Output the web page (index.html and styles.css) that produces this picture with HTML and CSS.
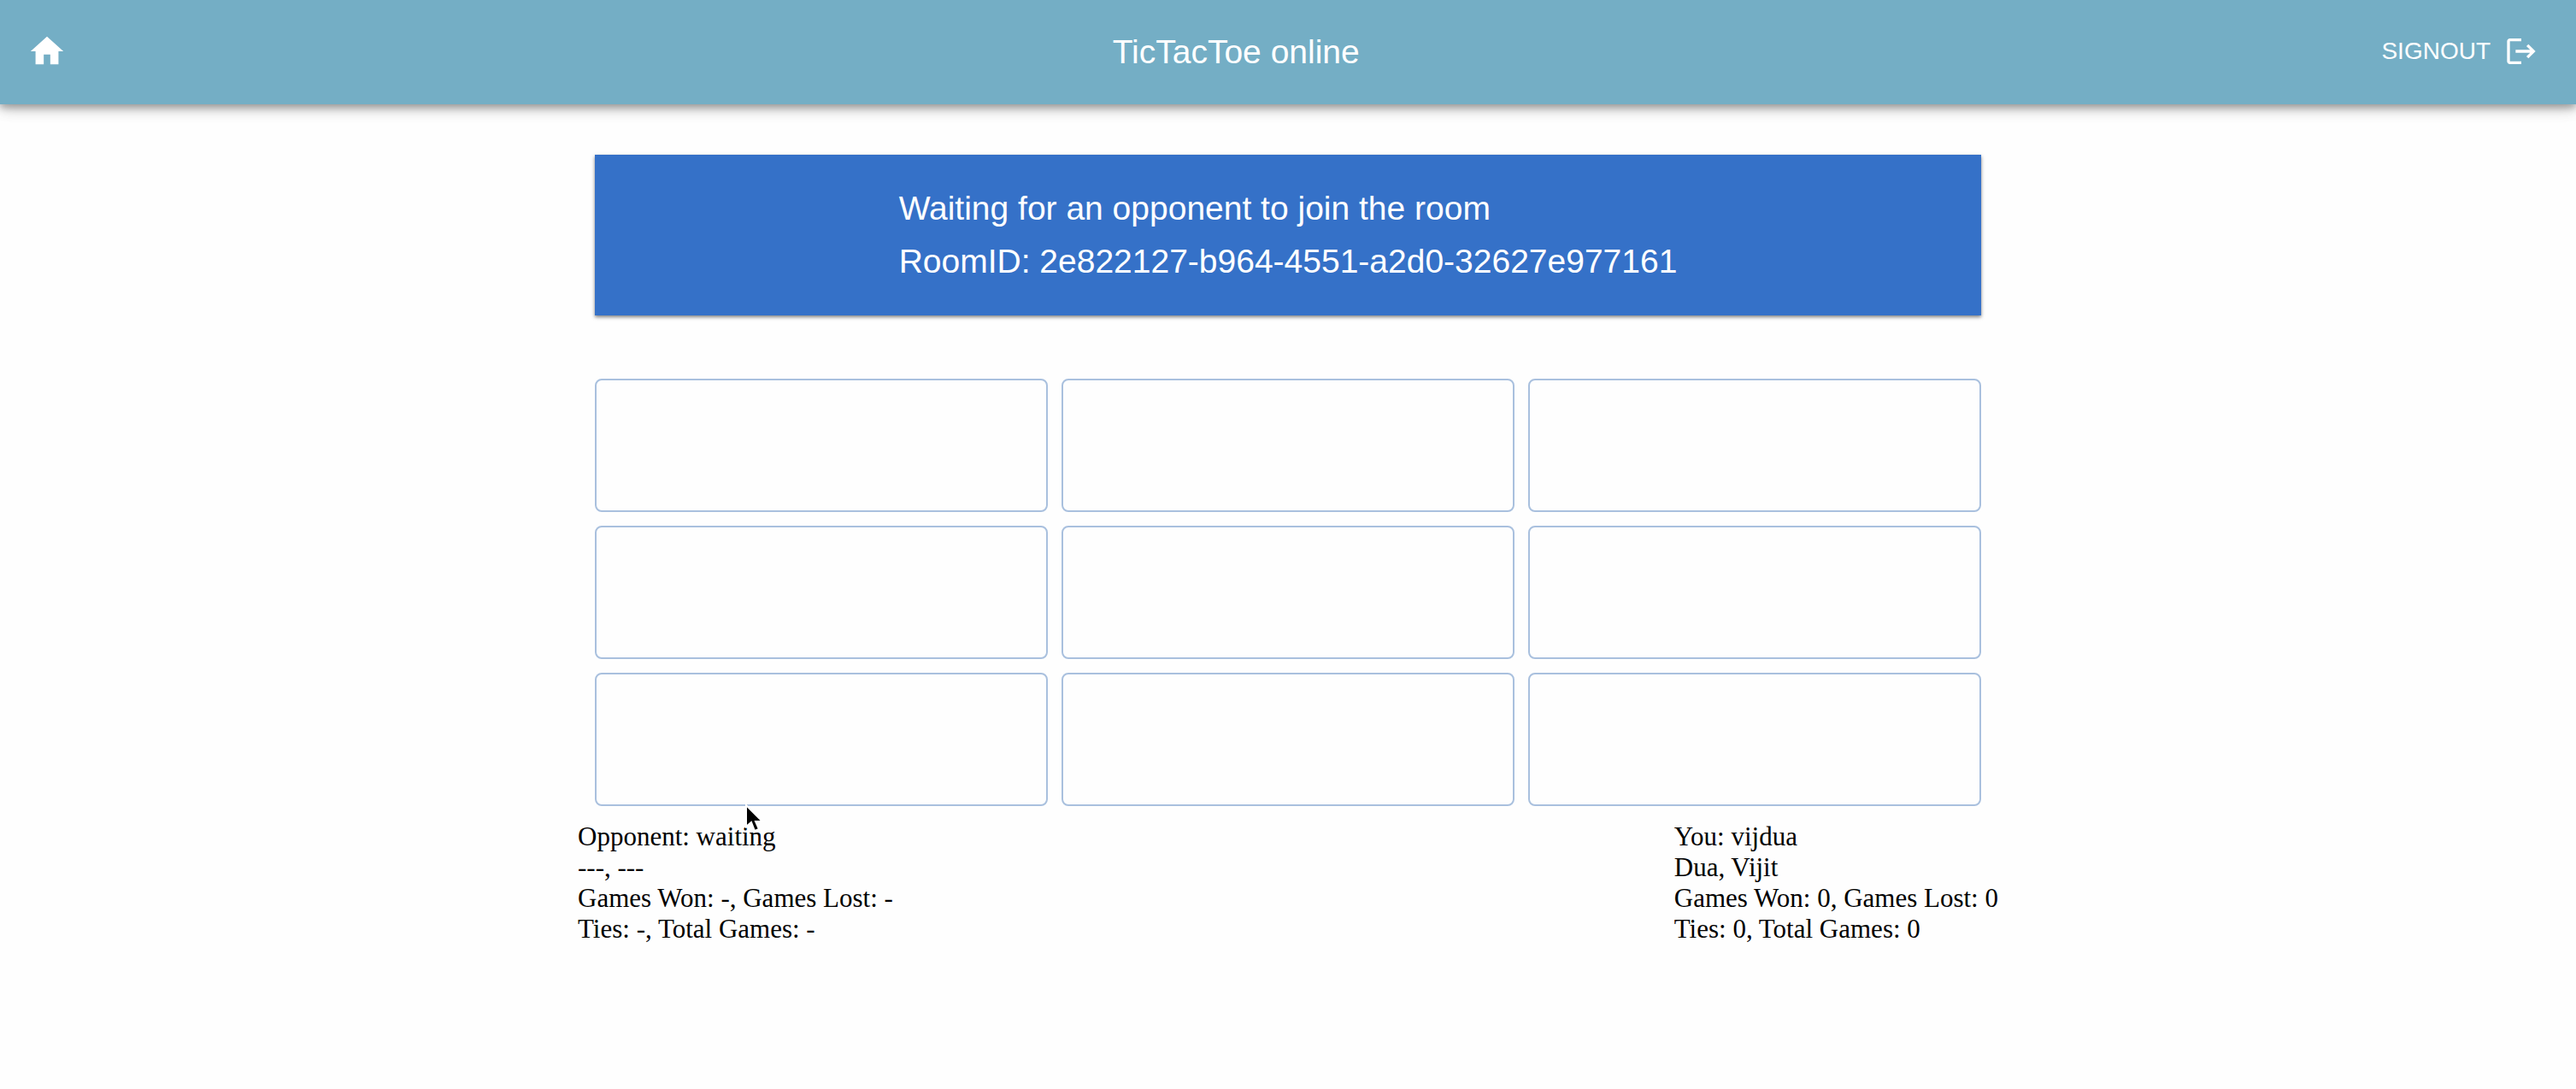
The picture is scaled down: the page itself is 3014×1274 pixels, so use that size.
FILE: index.html
```html
<!DOCTYPE html>
<html lang="en">
<head>
<meta charset="utf-8">
<meta name="viewport" content="width=device-width, initial-scale=1">
<title>TicTacToe online</title>
<link rel="stylesheet" href="styles.css">
</head>
<body>
<header class="appbar">
  <a class="home" href="#" aria-label="Home">
    <svg class="home-icon" viewBox="0 0 24 24" aria-hidden="true"><path d="M10 20v-6h4v6h5v-8h3L12 3 2 12h3v8z"/></svg>
  </a>
  <h1 class="title">TicTacToe online</h1>
  <button class="signout" type="button">
    SIGNOUT
    <svg class="signout-icon" viewBox="0 0 24 24" aria-hidden="true"><path d="m17 7-1.410 1.410L18.170 11H8v2h10.170l-2.580 2.580L17 17l5-5zM4 5h8V3H4c-1.100 0-2 .9-2 2v14c0 1.100.9 2 2 2h8v-2H4z"/></svg>
  </button>
</header>
<main class="game">
  <section class="banner">
    <div class="banner-text">
      <p>Waiting for an opponent to join the room</p>
      <p>RoomID: 2e822127-b964-4551-a2d0-32627e977161</p>
    </div>
  </section>
  <section class="board" aria-label="Board">
    <button class="cell" type="button" aria-label="Row 1, column 1"></button>
    <button class="cell" type="button" aria-label="Row 1, column 2"></button>
    <button class="cell" type="button" aria-label="Row 1, column 3"></button>
    <button class="cell" type="button" aria-label="Row 2, column 1"></button>
    <button class="cell" type="button" aria-label="Row 2, column 2"></button>
    <button class="cell" type="button" aria-label="Row 2, column 3"></button>
    <button class="cell" type="button" aria-label="Row 3, column 1"></button>
    <button class="cell" type="button" aria-label="Row 3, column 2"></button>
    <button class="cell" type="button" aria-label="Row 3, column 3"></button>
  </section>
  <section class="players">
    <div class="player">
      <div>Opponent: waiting</div>
      <div>---, ---</div>
      <div>Games Won: -, Games Lost: -</div>
      <div>Ties: -, Total Games: -</div>
    </div>
    <div class="player">
      <div>You: vijdua</div>
      <div>Dua, Vijit</div>
      <div>Games Won: 0, Games Lost: 0</div>
      <div>Ties: 0, Total Games: 0</div>
    </div>
    <svg class="pointer" viewBox="0 0 24 36" aria-hidden="true"><path d="M2 2V27L8 22 12 32 17 30 13 21H21Z"/></svg>
  </section>
</main>
</body>
</html>
```

FILE: styles.css
```css
* {
  box-sizing: border-box;
}

body {
  margin: 0;
  background: #fefefe;
  color: #000;
  font-family: "Liberation Serif", "Times New Roman", serif;
  font-size: 31px;
  line-height: 36px;
}

.appbar {
  display: flex;
  justify-content: space-between;
  align-items: center;
  height: 122px;
  padding: 0 44px 0 4px;
  background: #74aec5;
  color: #fff;
  font-family: "Liberation Sans", Helvetica, Arial, sans-serif;
  box-shadow: 0 4px 8px rgba(0, 0, 0, 0.26), 0 6px 16px rgba(0, 0, 0, 0.14), 0 2px 20px rgba(0, 0, 0, 0.12);
}

.home {
  display: flex;
  padding: 0 28px 2px;
  color: inherit;
}

.home-icon {
  width: 46px;
  height: 46px;
  fill: currentColor;
}

.title {
  margin: 0;
  font-size: 39px;
  font-weight: 400;
  line-height: 62px;
}

.signout {
  display: flex;
  align-items: center;
  gap: 16px;
  padding: 0 0 2px;
  border: 0;
  background: none;
  color: inherit;
  font: inherit;
  font-size: 28px;
  line-height: 48px;
}

.signout-icon {
  width: 40px;
  height: 40px;
  fill: currentColor;
}

.game {
  max-width: 1662px;
  margin: 0 auto;
  padding-top: 59px;
}

.banner {
  display: flex;
  justify-content: center;
  margin: 0 20px 74px;
  padding: 32px;
  background: #3571c8;
  color: #fff;
  font-family: "Liberation Sans", Helvetica, Arial, sans-serif;
  font-size: 39px;
  line-height: 62px;
  box-shadow: 0 2px 4px rgba(0, 0, 0, 0.5);
}

.banner p {
  margin: 0;
}

.board {
  display: grid;
  grid-template-columns: repeat(3, 1fr);
  gap: 16px;
  margin: 0 20px;
}

.cell {
  height: 156px;
  padding: 0;
  border: 2px solid #a9c0de;
  border-radius: 8px;
  background: transparent;
}

.players {
  position: relative;
  display: flex;
  justify-content: space-between;
  padding-top: 18px;
}

.pointer {
  position: absolute;
  top: -3px;
  left: 195px;
  width: 24px;
  height: 36px;
  fill: #000;
  stroke: #fff;
  stroke-width: 2;
}
```
